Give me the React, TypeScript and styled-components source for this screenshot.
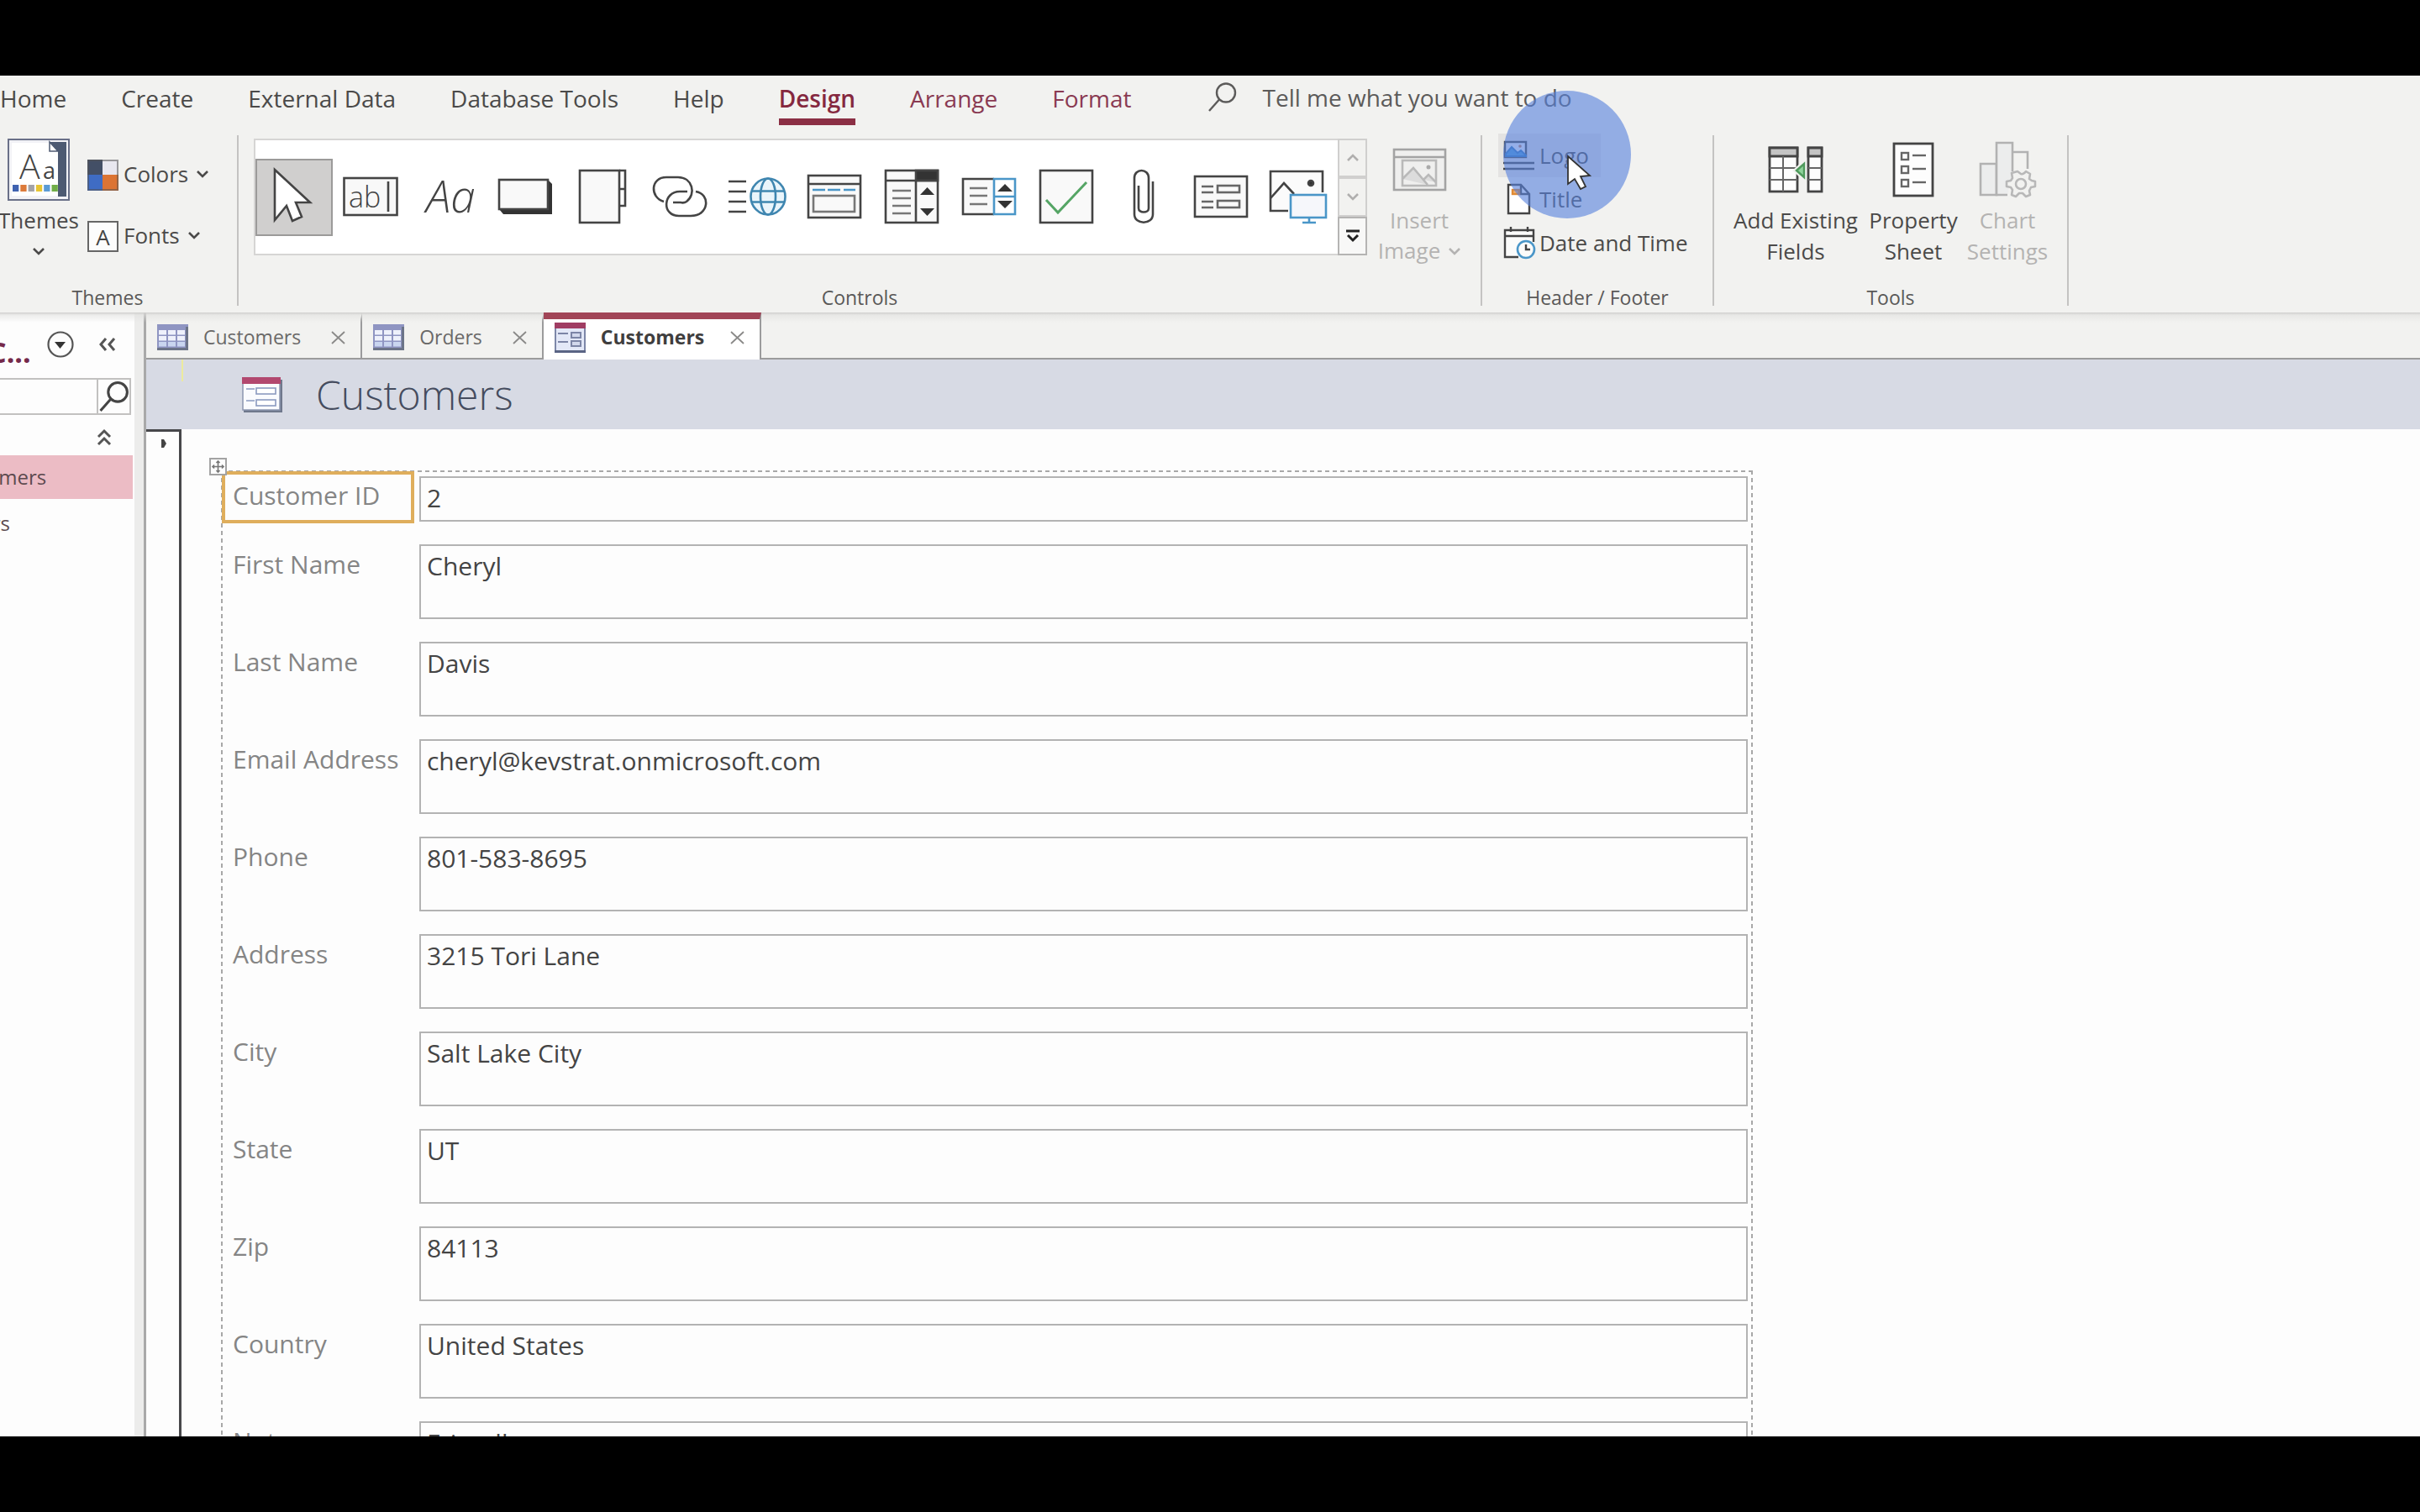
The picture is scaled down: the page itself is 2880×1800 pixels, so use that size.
import React from "react";
import styled, { createGlobalStyle, css } from "styled-components";

const UI = `"Open Sans", "Noto Sans", sans-serif`;

const Global = createGlobalStyle`
  * { box-sizing: border-box; }
  html, body { margin: 0; background: #000; }
  button, input { font: inherit; color: inherit; margin: 0; }
  button { background: none; border: 0; padding: 0; text-align: center; white-space: nowrap; }
  svg { display: block; flex: none; fill: none; overflow: visible; }
`;

const Letterbox = styled.div`
  height: 100vh;
  padding: 90px 0;
  background: #000;
`;

const Window = styled.div`
  height: 100%;
  display: flex;
  flex-direction: column;
  overflow: hidden;
  background: #f2f2f0;
  color: #4b4a49;
  font-family: ${UI};
  font-size: 26px;
  line-height: 37px;
`;

/* ---------- menu ---------- */

const Menu = styled.nav`
  display: flex;
  align-items: flex-start;
  gap: 65px;
  height: 60px;
  padding-top: 8px;
  font-size: 28px;
`;

const MenuItem = styled.button<{ $accent?: boolean; $active?: boolean }>`
  flex: none;
  height: 51px;
  padding-bottom: 13px;
  line-height: 38px;
  border-bottom: 8px solid transparent;
  ${(p) => p.$accent && css`color: #8a3a52;`}
  ${(p) => p.$active && css`
    color: #85283f;
    font-weight: 600;
    border-color: #8b2f44;
  `}
`;

const TellMe = styled.label`
  display: flex;
  align-items: center;
  gap: 30px;
  margin-left: 27px;
  height: 36px;
  input {
    width: 420px;
    padding: 0;
    border: 0;
    background: none;
    outline: 0;
  }
  input::placeholder { color: #5c5b5a; opacity: 1; }
`;

/* ---------- ribbon ---------- */

const Ribbon = styled.section`
  display: flex;
  flex: none;
  height: 222px;
  padding: 11px 0 8px;
`;

const Group = styled.div<{ $w: number; $cut?: boolean }>`
  flex: none;
  display: flex;
  flex-direction: column;
  width: ${(p) => p.$w}px;
  margin-left: ${(p) => (p.$cut ? -26 : 0)}px;
  padding-left: ${(p) => (p.$cut ? 26 : 0)}px;
  border-right: 2px solid #c4c3c2;
`;

const GroupBody = styled.div<{ $pad?: string; $gap?: number }>`
  flex: 1;
  display: flex;
  align-items: flex-start;
  gap: ${(p) => p.$gap ?? 0}px;
  padding: ${(p) => p.$pad ?? "0"};
`;

const Caption = styled.div<{ $cut?: boolean }>`
  font-size: 23px;
  line-height: 28px;
  height: 24px;
  text-align: center;
  margin-left: ${(p) => (p.$cut ? -26 : 0)}px;
  color: #5a5958;
`;

const BigButton = styled.button<{ $w: number; $dim?: boolean }>`
  display: flex;
  flex-direction: column;
  align-items: center;
  width: ${(p) => p.$w}px;
  color: ${(p) => (p.$dim ? "#b4b3b2" : "#4b4a49")};
`;

const IconSlot = styled.span`
  display: flex;
  align-items: center;
  justify-content: center;
  height: 74px;
  margin-bottom: 5px;
`;

const WithChevron = styled.span`
  display: flex;
  align-items: center;
  gap: 10px;
  height: 37px;
  padding-bottom: 2px;
`;

const Stack = styled.div<{ $gap: number; $pad?: string; $lift?: boolean }>`
  display: flex;
  flex-direction: column;
  align-items: flex-start;
  gap: ${(p) => p.$gap}px;
  padding: ${(p) => p.$pad ?? "0"};
  margin-top: ${(p) => (p.$lift ? -2 : 0)}px;
  position: relative;
`;

const SmallButton = styled.button<{ $h: number; $hover?: boolean }>`
  display: flex;
  align-items: center;
  gap: 6px;
  height: ${(p) => p.$h}px;
  padding: 0 14px 0 6px;
  background: ${(p) => (p.$hover ? "#e4e3e2" : "none")};
`;

const SmallIcon = styled.span`
  display: flex;
  justify-content: center;
  width: 37px;
`;

const Gallery = styled.div`
  display: flex;
  height: 139px;
  border: 2px solid #d6d5d4;
  border-right: 0;
  background: #fff;
`;

const GalleryItem = styled.button<{ $on?: boolean }>`
  display: flex;
  align-items: center;
  justify-content: center;
  align-self: center;
  width: 92px;
  height: 92px;
  padding: 0 2px 1px 0;
  ${(p) => p.$on && css`
    background: #d0cfce;
    border: 2px solid #9b9a99;
  `}
`;

const Scroller = styled.div`
  display: grid;
  grid-template-rows: 1fr 1fr 1fr;
  width: 35px;
  height: 139px;
  margin-right: 8px;
`;

const ScrollButton = styled.button<{ $on?: boolean }>`
  display: flex;
  align-items: center;
  justify-content: center;
  border: 2px solid ${(p) => (p.$on ? "#b5b4b3" : "#d0cfce")};
  background: ${(p) => (p.$on ? "#f8f8f7" : "#f2f2f0")};
`;

const Pointer = styled.div`
  position: absolute;
  left: 6px;
  top: -51px;
  width: 152px;
  height: 152px;
  border-radius: 50%;
  background: rgba(86, 129, 221, 0.61);
  pointer-events: none;
  svg { position: absolute; left: 75px; top: 76px; }
`;

/* ---------- work area ---------- */

const Work = styled.div`
  flex: 1;
  min-height: 0;
  display: flex;
  position: relative;
`;

const Shade = styled.div`
  position: absolute;
  inset: 0 0 auto 0;
  height: 12px;
  background: linear-gradient(#cfcecd, rgba(225, 225, 223, 0.6) 3px, rgba(242, 242, 240, 0));
  pointer-events: none;
`;

const NavPane = styled.aside`
  flex: none;
  width: 174px;
  padding-right: 11px;
  background: #ececeb;
  border-right: 3px solid #a9a9a9;
`;

const NavInner = styled.div`
  height: 100%;
  padding-right: 2px;
  overflow: hidden;
  background: #fdfdfd;
`;

const NavHead = styled.div`
  display: flex;
  align-items: center;
  height: 78px;
  padding-bottom: 3px;
  h2 {
    margin: 18px 0 0 -14px;
    width: 70px;
    font-size: 34px;
    font-weight: 700;
    line-height: 40px;
    color: #75294a;
  }
  button + button { margin-left: 30px; }
`;

const NavSearch = styled.div`
  display: flex;
  width: 156px;
  height: 44px;
  border: 2px solid #c2c1c0;
  border-left: 0;
  input { width: 117px; min-width: 0; border: 0; background: none; }
  button { border-left: 2px solid #c2c1c0; padding-left: 1px; }
`;

const NavSection = styled.div`
  display: flex;
  align-items: center;
  justify-content: flex-end;
  height: 48px;
  padding: 6px 25px 0 0;
`;

/* the pane is scrolled sideways, so only the ends of the object names show */
const NavItem = styled.button<{ $on?: boolean }>`
  display: block;
  width: 100%;
  height: 52px;
  margin-bottom: 3px;
  text-align: left;
  text-indent: -66px;
  font-size: 24px;
  line-height: 50px;
  color: #5c4a4f;
  background: ${(p) => (p.$on ? "#ecbcc5" : "none")};
`;

const Document = styled.main`
  flex: 1;
  min-width: 0;
  display: flex;
  flex-direction: column;
`;

const Tabs = styled.div`
  display: flex;
  flex: none;
  height: 56px;
  box-shadow: inset 0 -2px #9b9b9c;
`;

const Tab = styled.div<{ $on?: boolean }>`
  display: flex;
  align-items: center;
  padding: 0 18px 5px 13px;
  font-size: 23px;
  color: #6a6968;
  border-right: 2px solid #9b9b9c;
  border-top: 8px solid transparent;
  button:first-child { display: flex; align-items: center; gap: 18px; }
  button:last-child { margin-left: ${(p) => (p.$on ? 31 : 36)}px; }
  ${(p) => p.$on && css`
    position: relative;
    z-index: 1;
    color: #3f3e3e;
    font-weight: 700;
    background: #fff;
    border-top-color: #a14557;
  `}
`;

const FormHeader = styled.header`
  position: relative;
  flex: none;
  display: flex;
  align-items: center;
  gap: 40px;
  height: 83px;
  padding-left: 114px;
  background: #d7dae4;
  h1 {
    margin: 0;
    font-size: 48px;
    font-weight: 300;
    line-height: 58px;
    color: #454c5e;
  }
`;

const Tick = styled.i`
  position: absolute;
  left: 42px;
  top: 0;
  width: 2px;
  height: 26px;
  background: #ecea9e;
`;

const Detail = styled.div`
  flex: 1;
  min-height: 0;
  display: flex;
  overflow: hidden;
  background: #fdfdfd;
`;

const RecordSelector = styled.button`
  flex: none;
  display: flex;
  align-items: flex-start;
  justify-content: flex-end;
  width: 42px;
  padding: 9px 14px 0 0;
  border-top: 3px solid #47474a;
  border-right: 3px solid #47474a;
`;

const Fields = styled.form`
  --dash: #a8a8a8 0 5px, transparent 5px 9px;
  position: relative;
  flex: 0 1 1823px;
  align-self: flex-start;
  display: flex;
  flex-direction: column;
  gap: 27px;
  margin: 49px 20px 0 47px;
  padding: 7px 6px 40px 0;
  background:
    repeating-linear-gradient(90deg, var(--dash)) 0 0 / 100% 2px no-repeat,
    repeating-linear-gradient(180deg, var(--dash)) 0 0 / 2px 100% no-repeat,
    repeating-linear-gradient(180deg, var(--dash)) 100% 0 / 2px 100% no-repeat;
  font-size: 30px;
  line-height: 36px;
`;

const MoveHandle = styled.button`
  position: absolute;
  left: -14px;
  top: -15px;
  width: 21px;
  height: 21px;
  border: 2px solid #a3a3a3;
  background: #fdfdfd;
`;

const FieldRow = styled.div`
  display: grid;
  grid-template-columns: 236px 1fr;
  align-items: start;
  position: relative;
`;

const FieldLabel = styled.label<{ $on?: boolean }>`
  padding: 6px 0 0 14px;
  color: #858585;
  white-space: nowrap;
  ${(p) => p.$on && css`
    margin: -6px 6px -4px 1px;
    height: 62px;
    padding: 7px 0 0 9px;
    border: 4px solid #dfae5c;
    background: #fdfdfd;
  `}
`;

const FieldInput = styled.input<{ $short?: boolean }>`
  width: 100%;
  height: ${(p) => (p.$short ? 54 : 89)}px;
  padding: 0 6px ${(p) => (p.$short ? 4 : 39)}px 7px;
  border: 2px solid #b3b3b3;
  border-radius: 0;
  outline: 0;
  background: #fdfdfd;
  color: #444;
`;

/* ---------- drawings ---------- */

const INK = "#444";
const BLUE = "#4a96c8";

const Chevron = ({ color = "#4b4a49", up = false, size = 14 }: { color?: string; up?: boolean; size?: number }) => (
  <svg width={size} height="10" viewBox="0 0 14 10" stroke={color} strokeWidth="2.6">
    <path d={up ? "M1 8l6-6 6 6" : "M1 2l6 6 6-6"} />
  </svg>
);

const Magnifier = ({ w = 34, h = 36, color = "#5c5b5a", sw = 2.4 }: { w?: number; h?: number; color?: string; sw?: number }) => (
  <svg width={w} height={h} viewBox="0 0 34 36" stroke={color} strokeWidth={sw}>
    <circle cx="21" cy="12.5" r="11" />
    <path d="M13 20.500L1 34" />
  </svg>
);

const ArrowIcon = () => (
  <svg width="52" height="68" viewBox="0 0 52 68" stroke={INK} strokeWidth="2.6">
    <path d="M4 2v60l14-17 7 18 11-5-7-17h17z" fill="#fff" />
  </svg>
);

const GlyphText = styled.text`
  font-family: ${UI};
  fill: #444;
`;

const TextBoxIcon = () => (
  <svg width="66" height="48" viewBox="0 0 66 48" stroke={INK} strokeWidth="2.6">
    <rect x="1.500" y="2" width="63" height="44" fill="#f8f8f8" />
    <GlyphText x="7" y="37" fontSize="34" fontWeight="300" stroke="none">ab</GlyphText>
    <path d="M54 6v36" />
  </svg>
);

const LabelIcon = () => (
  <svg width="66" height="48" viewBox="0 0 66 48">
    <GlyphText x="7" y="43" fontSize="53" fontWeight="300" fontStyle="italic">Aa</GlyphText>
  </svg>
);

const ButtonIcon = () => (
  <svg width="66" height="44" viewBox="0 0 66 44">
    <path d="M2 37l5 6h58V7l-5-5z" fill="#333" />
    <rect x="2" y="2" width="58" height="35" fill="#f9f9f9" stroke={INK} strokeWidth="2.6" />
  </svg>
);

const TabControlIcon = () => (
  <svg width="58" height="66" viewBox="0 0 58 66" stroke={INK} strokeWidth="2.6">
    <rect x="2" y="2" width="47" height="62" fill="#f9f9f9" />
    <path d="M49 2h7v42h-7M49 24h7" />
  </svg>
);

const LinkIcon = () => (
  <svg width="68" height="50" viewBox="0 0 68 50" stroke={INK} strokeWidth="2.600">
    <path d="M15 31C-2 26-1 2 18 2h14c17 0 22 20 10 29q-3 2-7 1h-9" />
    <path d="M43 19h-9c-20 0-22 29-1 29h14c22 0 24-26 6-29" />
  </svg>
);

const WebIcon = () => (
  <svg width="70" height="46" viewBox="0 0 70 46" strokeWidth="2.6">
    <path d="M1 5h21M1 17h21M1 29h21M1 41h21" stroke={INK} />
    <g stroke="#3f86b0">
      <ellipse cx="48" cy="23" rx="20.500" ry="21.500" fill="#eaf5fb" />
      <ellipse cx="48" cy="23" rx="9" ry="21.500" />
      <path d="M29 16.500h38M29 29.500h38" />
    </g>
  </svg>
);

const NavControlIcon = () => (
  <svg width="66" height="54" viewBox="0 0 66 54" stroke={INK} strokeWidth="2.6">
    <rect x="2" y="2" width="62" height="50" fill="#f9f9f9" />
    <path d="M2 12h62" />
    <path d="M7 19h15M25 19h15M44 19h14" stroke={BLUE} />
    <rect x="8" y="26" width="49" height="19" stroke="#777" />
  </svg>
);

const ComboIcon = () => (
  <svg width="66" height="66" viewBox="0 0 66 66" stroke={INK} strokeWidth="2.6">
    <rect x="2" y="2" width="62" height="62" fill="#f9f9f9" />
    <rect x="38" y="2" width="26" height="12" fill="#333" />
    <path d="M2 14h62M38 14v50" />
    <path d="M10 26h22M10 35h22M10 44h22M10 53h22" stroke="#777" />
    <path d="M43 31h17l-8.500-9zM43 47h17l-8.500 9z" fill="#333" stroke="none" />
  </svg>
);

const ListBoxIcon = () => (
  <svg width="66" height="46" viewBox="0 0 66 46" stroke={INK} strokeWidth="2.6">
    <path d="M39 44H2V2h37" fill="#f9f9f9" />
    <path d="M10 13h21M10 22h21M10 32h21" stroke="#777" />
    <path d="M39 2h25v42H39zM39 23h25" stroke={BLUE} />
    <path d="M43 17h18l-9-9zM43 28h18l-9 9z" fill="#333" stroke="none" />
  </svg>
);

const CheckIcon = () => (
  <svg width="66" height="66" viewBox="0 0 66 66" stroke={INK} strokeWidth="2.6">
    <rect x="2" y="2" width="62" height="62" fill="#f9f9f9" />
    <path d="M9 37l14 15 34-36" stroke="#55a565" strokeWidth="3" />
  </svg>
);

const ClipIcon = () => (
  <svg width="26" height="66" viewBox="0 0 26 66" stroke={INK} strokeWidth="2.6">
    <path d="M24 15v39c0 13-22 13-22 0V11c0-12 17-12 17 0v36c0 6-12 6-12 0V20" />
  </svg>
);

const SubformIcon = () => (
  <svg width="66" height="52" viewBox="0 0 66 52" stroke={INK} strokeWidth="2.6">
    <rect x="2" y="2" width="62" height="48" fill="#f9f9f9" />
    <g stroke="#666">
      <path d="M10 14h14M10 21h14M10 32h14M10 39h14" />
      <rect x="29" y="13" width="26" height="8" />
      <rect x="29" y="31" width="26" height="8" />
    </g>
  </svg>
);

const ImageScreenIcon = () => (
  <svg width="70" height="64" viewBox="0 0 70 64" stroke={INK} strokeWidth="2.6">
    <path d="M23 49H2V2h62v25" fill="#fbfbfb" />
    <path d="M2 34l16-18 12 13" />
    <circle cx="50" cy="16" r="3" fill="#333" />
    <g stroke={BLUE}>
      <rect x="26" y="30" width="42" height="27" fill="#f6f7fb" />
      <path d="M48 57v6M40 63h16" />
    </g>
  </svg>
);

const MoreIcon = () => (
  <svg width="18" height="16" viewBox="0 0 18 16" stroke="#222" strokeWidth="3">
    <path d="M1 2h16M3 7l6 6 6-6" />
  </svg>
);

const ThemesIcon = () => (
  <svg width="74" height="74" viewBox="0 0 74 74">
    <rect x="1" y="1" width="72" height="72" fill="#f2f2f6" stroke="#6a7088" strokeWidth="2" />
    <path d="M50 4h20v65H60V15H50z" fill="#4d5a72" />
    <path d="M5 5h45l10 10v53H5z" fill="#fff" />
    <path d="M50 4v11h10z" fill="#fff" stroke="#4d5a72" strokeWidth="1.5" />
    <GlyphText x="14" y="48" fontSize="41" fontWeight="300">A</GlyphText>
    <GlyphText x="42" y="48" fontSize="27">a</GlyphText>
    {["#3f62b0", "#dc7a3a", "#a3a3a8", "#e8c534", "#5b9bd5", "#70ad47"].map((c, i) => (
      <rect key={c} x={6 + i * 9.3} y="55" width="7.300" height="8" fill={c} />
    ))}
  </svg>
);

const ColorsIcon = () => (
  <svg width="37" height="37" viewBox="0 0 37 37">
    <path d="M0 0h18v18H0z" fill="#434f66" />
    <path d="M18 0h19v18H18z" fill="#e8e7f0" />
    <path d="M0 18h18v19H0z" fill="#3f6cc4" />
    <path d="M18 18h19v19H18z" fill="#dc7434" />
    <rect x="1" y="1" width="35" height="35" stroke="#555" strokeOpacity=".55" strokeWidth="2" />
  </svg>
);

const FontsIcon = () => (
  <svg width="37" height="37" viewBox="0 0 37 37">
    <rect x="1" y="1" width="35" height="35" fill="#fcfcfc" stroke="#666" strokeWidth="2" />
    <GlyphText x="18.500" y="29" fontSize="26" textAnchor="middle">A</GlyphText>
  </svg>
);

const InsertImageIcon = () => (
  <svg width="65" height="52" viewBox="0 0 65 52" stroke="#a3a3a3" strokeWidth="2.6">
    <rect x="2" y="2" width="61" height="48" fill="#efefee" />
    <path d="M2 11h61" />
    <g stroke="#b9b9b9">
      <rect x="12" y="15" width="40" height="30" />
      <path d="M12 37l13-13 17 20M37 38l6-6 9 9" fill="#dcdcdc" />
    </g>
    <circle cx="43" cy="23" r="2.500" fill="#aaa" stroke="none" />
  </svg>
);

const LogoIcon = () => (
  <svg width="37" height="36" viewBox="0 0 37 36" stroke={INK} strokeWidth="2.4">
    <rect x="2" y="2" width="25" height="18" fill="#f6f8fb" />
    <path d="M3 16l7-8 7 7 4-3 6 6v1H3z" fill="#4a9ad8" stroke="#2f78bd" strokeWidth="2" />
    <circle cx="20" cy="7" r="1.800" fill="#c47a5a" stroke="none" />
    <path d="M0 27h37M0 34h37" />
  </svg>
);

const TitleIcon = () => (
  <svg width="29" height="38" viewBox="0 0 29 38" stroke={INK} strokeWidth="2.4">
    <path d="M2 2h15l10 11v23H2z" fill="#fff" />
    <path d="M17 2v11h10" />
    <rect x="7" y="8" width="8" height="5" fill="#f0b070" stroke="#e08a34" />
  </svg>
);

const DateIcon = () => (
  <svg width="38" height="38" viewBox="0 0 38 38" stroke={INK} strokeWidth="2.4">
    <path d="M18 36H2V4h34v14" fill="#fbfbfa" />
    <path d="M2 11h34M9 0v6M29 0v6" />
    <circle cx="27" cy="27" r="10" fill="#fbfbfa" stroke={BLUE} strokeWidth="2.600" />
    <path d="M27 21v6h5" />
  </svg>
);

const AddFieldsIcon = () => (
  <svg width="66" height="56" viewBox="0 0 66 56" stroke="#444" strokeWidth="2.8">
    <rect x="2" y="2" width="33" height="52" fill="#fdfdfd" />
    <rect x="48" y="2" width="16" height="52" fill="#fdfdfd" />
    <path d="M2 2h33v10H2zM48 2h16v10H48z" fill="#c4c4c4" />
    <path d="M18 12v42M2 26h33M2 40h33M48 26h16M48 40h16" stroke="#666" strokeWidth="2" />
    <path d="M32 29l12-11v22z" fill="#f2f2f0" stroke="#f2f2f0" strokeWidth="4" />
    <path d="M34 29l9-8v16z" fill="#8fd39b" stroke="#4f9a5c" strokeWidth="2.4" />
  </svg>
);

const PropertyIcon = () => (
  <svg width="50" height="66" viewBox="0 0 50 66" stroke={INK} strokeWidth="2.8">
    <rect x="2" y="2" width="46" height="62" fill="#fdfdfd" />
    <g stroke="#666" strokeWidth="2.4">
      {[13, 29, 45].map((y) => (
        <React.Fragment key={y}>
          <rect x="11" y={y} width="8" height="8" />
          <path d={`M24 ${y + 3}h16`} />
        </React.Fragment>
      ))}
    </g>
  </svg>
);

const ChartIcon = () => (
  <svg width="68" height="68" viewBox="0 0 68 68" stroke="#b2b2b2" strokeWidth="2.6">
    <path d="M2 27h19v37H2z" fill="#eceded" />
    <path d="M34 64H21V2h19v34" fill="#eceded" />
    <path d="M40 13h18v20" />
    <path
      d="M46 36l4 3q3 1 6-3l5 3-1 6 3 2 4 1v6l-5 1-2 4 1 5-5 2-4-4h-4l-4 4-5-2 1-6-2-3-5-1v-6l5-1 2-3-1-6z"
      fill="#f2f2f0"
      strokeLinejoin="round"
      stroke="#b8b8b8"
    />
    <circle cx="50" cy="51" r="6" stroke="#b8b8b8" />
  </svg>
);

const CursorIcon = () => (
  <svg width="32" height="44" viewBox="0 0 32 44">
    <path d="M2 2v33l8-6 7 12 6-3-6-12 11-1z" fill="#fff" stroke="#333" strokeWidth="1.8" />
  </svg>
);

const CircleMenuIcon = () => (
  <svg width="32" height="33" viewBox="0 0 32 33" stroke="#555" strokeWidth="2.200">
    <ellipse cx="16" cy="17" rx="14.500" ry="14.500" />
    <path d="M9 14h13l-6.500 8z" fill="#333" stroke="none" />
  </svg>
);

const DoubleChevron = ({ up = false }: { up?: boolean }) =>
  up ? (
    <svg width="18" height="20" viewBox="0 0 18 20" stroke="#555" strokeWidth="3">
      <path d="M2 9l7-7 7 7M2 18l7-7 7 7" />
    </svg>
  ) : (
    <svg width="20" height="18" viewBox="0 0 20 18" stroke="#555" strokeWidth="3">
      <path d="M8 2L2 9l6 7M18 2l-6 7 6 7" />
    </svg>
  );

const TableIcon = () => (
  <svg width="37" height="31" viewBox="0 0 37 31">
    <rect width="37" height="31" fill="#8f95c2" />
    <path d="M0 28h37v3H0zM34 3h3v28h-3z" fill="#6c7488" />
    {[7, 14, 21].map((y) =>
      [2, 13, 24].map((x) => <rect key={`${x}-${y}`} x={x} y={y} width="9" height="5.500" fill={y === 21 ? "#c9d5ef" : "#eef1fb"} />)
    )}
  </svg>
);

const FormTabIcon = () => (
  <svg width="37" height="36" viewBox="0 0 37 36">
    <rect x="1" y="1" width="35" height="34" fill="#e3e8f7" stroke="#7d87a8" strokeWidth="2" />
    <path d="M0 0h37v7H0z" fill="#a03d63" />
    <path d="M0 33h37v3H0z" fill="#5a6484" />
    <g stroke="#7c85a6" strokeWidth="2">
      <path d="M4 13h12M4 23h12" />
      <rect x="20" y="12" width="11" height="6" fill="#d2d8ec" />
      <rect x="20" y="22" width="11" height="6" fill="#d2d8ec" />
    </g>
  </svg>
);

const FormLogoIcon = () => (
  <svg width="48" height="42" viewBox="0 0 48 42">
    <path d="M2 3h46v39H2z" fill="#6f788c" />
    <rect x="1" y="1" width="44" height="38" fill="#fafbfe" stroke="#8d97b0" strokeWidth="1.500" />
    <path d="M0 0h46v8H0z" fill="#b2486f" />
    <g stroke="#8b9ac0" strokeWidth="1.600">
      <path d="M5 14h10M5 28h10" />
      <rect x="17" y="13" width="23" height="7" fill="#fff" />
      <rect x="17" y="27" width="23" height="7" fill="#fff" />
    </g>
  </svg>
);

const CloseIcon = () => (
  <svg width="17" height="16" viewBox="0 0 17 16" stroke="#8a8988" strokeWidth="1.800">
    <path d="M1 1l15 14M16 1L1 15" />
  </svg>
);

const MoveIcon = () => (
  <svg width="17" height="17" viewBox="0 0 17 17" stroke="#777" strokeWidth="1.600">
    <path d="M8.500 2v13M2 8.500h13M6.500 4l2-2 2 2M6.500 13l2 2 2-2M4 6.500l-2 2 2 2M13 6.500l2 2-2 2" />
  </svg>
);

/* ---------- data ---------- */

const galleryItems: [string, React.FC][] = [
  ["Select", ArrowIcon],
  ["Text Box", TextBoxIcon],
  ["Label", LabelIcon],
  ["Button", ButtonIcon],
  ["Tab Control", TabControlIcon],
  ["Link", LinkIcon],
  ["Web Browser Control", WebIcon],
  ["Navigation Control", NavControlIcon],
  ["Combo Box", ComboIcon],
  ["List Box", ListBoxIcon],
  ["Check Box", CheckIcon],
  ["Attachment", ClipIcon],
  ["Subform", SubformIcon],
  ["Image", ImageScreenIcon],
];

const fields = [
  ["Customer ID", "2"],
  ["First Name", "Cheryl"],
  ["Last Name", "Davis"],
  ["Email Address", "cheryl@kevstrat.onmicrosoft.com"],
  ["Phone", "801-583-8695"],
  ["Address", "3215 Tori Lane"],
  ["City", "Salt Lake City"],
  ["State", "UT"],
  ["Zip", "84113"],
  ["Country", "United States"],
  ["Notes", "Friendly"],
];

export default function App() {
  return (
    <Letterbox>
      <Global />
      <Window>
        <Menu>
          <MenuItem>Home</MenuItem>
          <MenuItem>Create</MenuItem>
          <MenuItem>External Data</MenuItem>
          <MenuItem>Database Tools</MenuItem>
          <MenuItem>Help</MenuItem>
          <MenuItem $accent $active>Design</MenuItem>
          <MenuItem $accent>Arrange</MenuItem>
          <MenuItem $accent>Format</MenuItem>
          <TellMe>
            <Magnifier />
            <input aria-label="Tell me" placeholder="Tell me what you want to do" />
          </TellMe>
        </Menu>

        <Ribbon>
          <Group $w={310} $cut>
            <GroupBody $pad="4px 0 0">
              <BigButton $w={92}>
                <IconSlot><ThemesIcon /></IconSlot>
                <span>Themes</span>
                <WithChevron><Chevron /></WithChevron>
              </BigButton>
              <Stack $gap={29} $pad="21px 0 0 6px">
                <SmallButton $h={44}>
                  <SmallIcon><ColorsIcon /></SmallIcon>
                  <WithChevron>Colors <Chevron /></WithChevron>
                </SmallButton>
                <SmallButton $h={44}>
                  <SmallIcon><FontsIcon /></SmallIcon>
                  <WithChevron>Fonts <Chevron /></WithChevron>
                </SmallButton>
              </Stack>
            </GroupBody>
            <Caption $cut>Themes</Caption>
          </Group>

          <Group $w={1480}>
            <GroupBody $pad="4px 0 0 18px">
              <Gallery>
                {galleryItems.map(([name, Icon], i) => (
                  <GalleryItem key={name} $on={i === 0} aria-label={name}>
                    <Icon />
                  </GalleryItem>
                ))}
              </Gallery>
              <Scroller>
                <ScrollButton aria-label="Previous row"><Chevron up color="#b0afae" /></ScrollButton>
                <ScrollButton aria-label="Next row"><Chevron color="#b0afae" /></ScrollButton>
                <ScrollButton $on aria-label="More controls"><MoreIcon /></ScrollButton>
              </Scroller>
              <BigButton $w={108} $dim>
                <IconSlot><InsertImageIcon /></IconSlot>
                <span>Insert</span>
                <WithChevron>Image <Chevron color="#b4b3b2" /></WithChevron>
              </BigButton>
            </GroupBody>
            <Caption>Controls</Caption>
          </Group>

          <Group $w={276}>
            <GroupBody $pad="0 0 0 19px">
              <Stack $gap={0} $lift>
                <SmallButton $h={52} $hover>
                  <SmallIcon><LogoIcon /></SmallIcon>Logo
                </SmallButton>
                <SmallButton $h={52}>
                  <SmallIcon><TitleIcon /></SmallIcon>Title
                </SmallButton>
                <SmallButton $h={52}>
                  <SmallIcon><DateIcon /></SmallIcon>Date and Time
                </SmallButton>
                <Pointer><CursorIcon /></Pointer>
              </Stack>
            </GroupBody>
            <Caption>Header / Footer</Caption>
          </Group>

          <Group $w={422}>
            <GroupBody $pad="4px 0 0 17px" $gap={4}>
              <BigButton $w={160}>
                <IconSlot><AddFieldsIcon /></IconSlot>
                <span>Add Existing<br />Fields</span>
              </BigButton>
              <BigButton $w={112}>
                <IconSlot><PropertyIcon /></IconSlot>
                <span>Property<br />Sheet</span>
              </BigButton>
              <BigButton $w={104} $dim>
                <IconSlot><ChartIcon /></IconSlot>
                <span>Chart<br />Settings</span>
              </BigButton>
            </GroupBody>
            <Caption>Tools</Caption>
          </Group>
        </Ribbon>

        <Work>
          <NavPane>
            <NavInner>
              <NavHead>
                <h2>C...</h2>
                <button aria-label="Navigation options"><CircleMenuIcon /></button>
                <button aria-label="Collapse pane"><DoubleChevron /></button>
              </NavHead>
              <NavSearch>
                <input aria-label="Search" />
                <button aria-label="Run search"><Magnifier w={36} h={37} color="#444" sw={3} /></button>
              </NavSearch>
              <NavSection>
                <button aria-label="Collapse section"><DoubleChevron up /></button>
              </NavSection>
              <NavItem $on>Customers</NavItem>
              <NavItem>Orders</NavItem>
            </NavInner>
          </NavPane>

          <Document>
            <Tabs>
              <Tab>
                <button><TableIcon />Customers</button>
                <button aria-label="Close Customers table"><CloseIcon /></button>
              </Tab>
              <Tab>
                <button><TableIcon />Orders</button>
                <button aria-label="Close Orders"><CloseIcon /></button>
              </Tab>
              <Tab $on>
                <button><FormTabIcon />Customers</button>
                <button aria-label="Close Customers form"><CloseIcon /></button>
              </Tab>
            </Tabs>
            <FormHeader>
              <Tick />
              <FormLogoIcon />
              <h1>Customers</h1>
            </FormHeader>
            <Detail>
              <RecordSelector aria-label="Select record">
                <svg width="7" height="10" viewBox="0 0 7 10"><path d="M0 0h3l3 5-3 5H0z" fill="#444" /></svg>
              </RecordSelector>
              <Fields>
                {fields.map(([label, value], i) => (
                  <FieldRow key={label}>
                    <FieldLabel htmlFor={`field-${i}`} $on={i === 0}>{label}</FieldLabel>
                    <FieldInput id={`field-${i}`} defaultValue={value} $short={i === 0} />
                  </FieldRow>
                ))}
                <MoveHandle type="button" aria-label="Move layout"><MoveIcon /></MoveHandle>
              </Fields>
            </Detail>
          </Document>
          <Shade />
        </Work>
      </Window>
    </Letterbox>
  );
}
